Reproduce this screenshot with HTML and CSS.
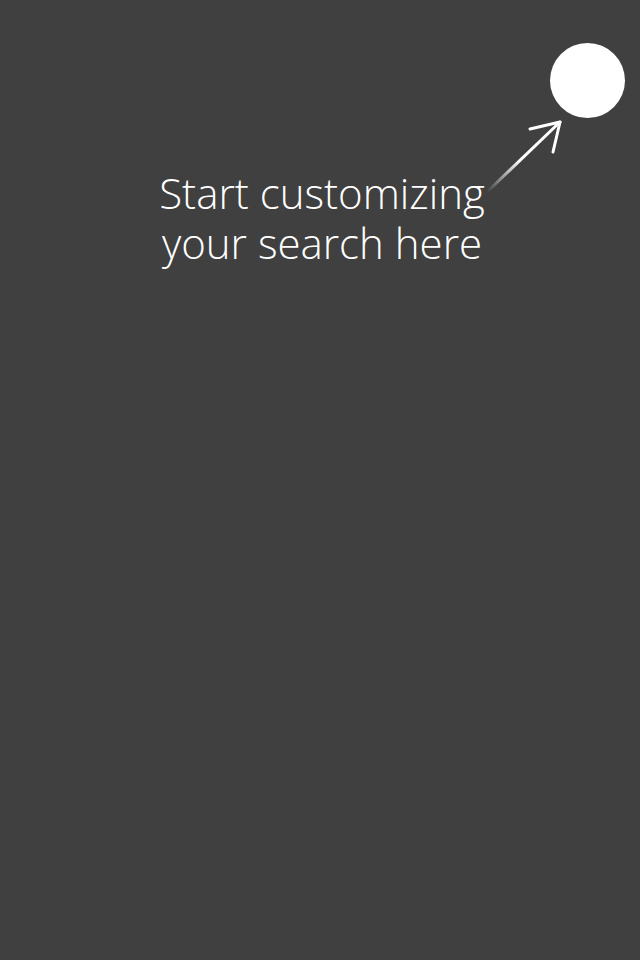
FILE: index.html
```html
<!DOCTYPE html>
<html>
<head>
<meta charset="utf-8">
<link rel="stylesheet" href="styles.css">
</head>
<body>
<div class="screen">
  <div class="topbar">
    <div class="dot"></div>
  </div>
  <svg class="arrow" width="100" height="100" viewBox="0 0 100 100">
    <defs>
      <linearGradient id="g" x1="0" y1="1" x2="1" y2="0">
        <stop offset="0" stop-color="#fff" stop-opacity="0"/>
        <stop offset="0.45" stop-color="#fff" stop-opacity="1"/>
      </linearGradient>
    </defs>
    <path d="M7 92 L80 22" stroke="url(#g)" stroke-width="3" stroke-linecap="round" fill="none"/>
    <path d="M50 29 L80 22 L73 52" stroke="#fff" stroke-width="3" stroke-linecap="round" stroke-linejoin="round" fill="none"/>
  </svg>
  <p class="hint">Start customizing<br>your search here</p>
</div>
</body>
</html>
```
FILE: styles.css
```css
html, body {
  margin: 0;
  padding: 0;
  background: #404040;
}
.screen {
  position: relative;
  width: 640px;
  height: 960px;
  background: #404040;
}
.topbar {
  display: flex;
  justify-content: flex-end;
  padding: 43px 15px 0 0;
}
.dot {
  width: 75px;
  height: 75px;
  border-radius: 50%;
  background: #fff;
}
.arrow {
  position: absolute;
  left: 480px;
  top: 100px;
}
.hint {
  margin: 50px 0 0 0;
  padding-left: 4px;
  text-align: center;
  font-family: "Open Sans", sans-serif;
  font-weight: 300;
  font-size: 42px;
  line-height: 50px;
  color: #fff;
}
```
